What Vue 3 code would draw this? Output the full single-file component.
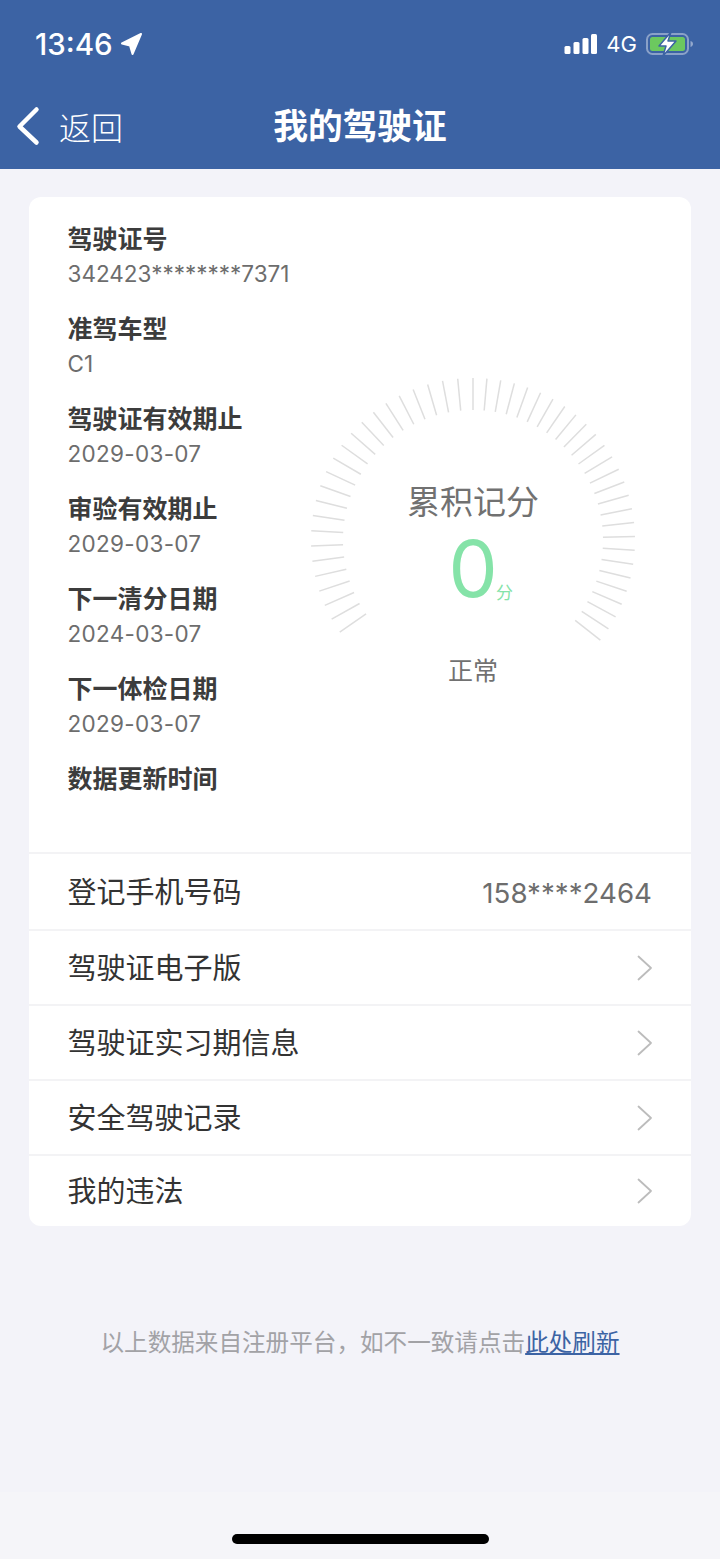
<script setup>
const items = [
  { label: '驾驶证号', value: '342423********7371' },
  { label: '准驾车型', value: 'C1' },
  { label: '驾驶证有效期止', value: '2029-03-07', date: true },
  { label: '审验有效期止', value: '2029-03-07', date: true },
  { label: '下一清分日期', value: '2024-03-07', date: true },
  { label: '下一体检日期', value: '2029-03-07', date: true },
  { label: '数据更新时间', value: '' }
]
const links = ['驾驶证电子版', '驾驶证实习期信息', '安全驾驶记录', '我的违法']

const c = 163
const ticks = []
const addTick = (deg) => {
  const a = (deg * Math.PI) / 180
  const s = Math.sin(a)
  const k = Math.cos(a)
  ticks.push({
    x1: (c + 130 * s).toFixed(2),
    y1: (c - 130 * k).toFixed(2),
    x2: (c + 162 * s).toFixed(2),
    y2: (c - 162 * k).toFixed(2)
  })
}
for (let i = 0; i <= 23; i++) addTick(-i * 5.42)
for (let i = 1; i <= 26; i++) addTick(i * 4.93)
</script>

<template>
  <div class="page">
    <header class="header">
      <div class="status">
        <div class="status-left">
          <span class="time">13:46</span>
          <svg class="loc" width="24" height="24" viewBox="0 0 24 24">
            <path d="M22 2 3 11.5 11 13.5 13.5 22Z" fill="#fff" stroke="#fff" stroke-width="2" stroke-linejoin="round" />
          </svg>
        </div>
        <div class="status-right">
          <svg width="34" height="22" viewBox="0 0 34 22">
            <rect x="0.5" y="13" width="6" height="8" rx="1.5" fill="#fff" />
            <rect x="9.5" y="9" width="6" height="12" rx="1.5" fill="#fff" />
            <rect x="18.5" y="5" width="6" height="16" rx="1.5" fill="#fff" />
            <rect x="27" y="1" width="6" height="20" rx="1.5" fill="#fff" />
          </svg>
          <span class="net">4G</span>
          <svg width="48" height="26" viewBox="0 0 48 26">
            <rect x="1" y="3" width="41" height="20" rx="5.5" fill="none" stroke="#fff" stroke-opacity=".4" stroke-width="2" />
            <rect x="4" y="6" width="35" height="14" rx="2.5" fill="#6cc85f" />
            <path d="M44.5 10v6c1.6-.4 2.5-1.6 2.5-3s-.9-2.600-2.500-3Z" fill="#fff" fill-opacity=".45" />
            <path d="M25 1 13 15h7l-3 10 13-15h-8Z" fill="#fff" stroke="#3c63a4" stroke-width="1.500" stroke-linejoin="round" />
          </svg>
        </div>
      </div>
      <nav class="nav">
        <div class="back">
          <svg width="26" height="40" viewBox="0 0 26 40">
            <path d="M21.500 3.500 4.500 20.500 21.500 36.500" fill="none" stroke="#fff" stroke-width="4.500" stroke-linecap="round" stroke-linejoin="round" />
          </svg>
          <span>返回</span>
        </div>
        <h1 class="title">我的驾驶证</h1>
      </nav>
    </header>

    <main class="main">
      <section class="card">
        <div class="top">
          <div class="info">
            <div v-for="item in items" :key="item.label" class="info-item">
              <div class="info-label">{{ item.label }}</div>
              <div class="info-value" :class="{ date: item.date }">{{ item.value }}</div>
            </div>
          </div>
          <div class="gauge">
            <svg class="dial" width="326" height="326" viewBox="0 0 326 326">
              <line
                v-for="(t, i) in ticks"
                :key="i"
                :x1="t.x1"
                :y1="t.y1"
                :x2="t.x2"
                :y2="t.y2"
                stroke="#dedede"
                stroke-width="1.500"
              />
            </svg>
            <div class="gauge-text">
              <div class="gauge-title">累积记分</div>
              <div class="gauge-score"><span class="zero">0</span><span class="unit">分</span></div>
              <div class="gauge-state">正常</div>
            </div>
          </div>
        </div>
        <div class="row row-first">
          <span class="row-label">登记手机号码</span>
          <span class="phone">158****2464</span>
        </div>
        <div v-for="(link, i) in links" :key="link" class="row" :class="{ 'row-last': i === links.length - 1 }">
          <span class="row-label">{{ link }}</span>
          <svg class="chev" width="16" height="26" viewBox="0 0 16 26">
            <path d="M1.500 1.500 14 13 1.500 24.500" fill="none" stroke="#bcbcbc" stroke-width="1.800" stroke-linecap="round" stroke-linejoin="round" />
          </svg>
        </div>
      </section>
      <p class="note">以上数据来自注册平台，如不一致请点击<a class="refresh">此处刷新</a></p>
    </main>

    <footer class="home">
      <div class="home-bar"></div>
    </footer>
  </div>
</template>

<style>
html, body { margin: 0; background: #f3f3f9; }
</style>

<style scoped>
.page {
  width: 720px;
  height: 1559px;
  display: flex;
  flex-direction: column;
  overflow: hidden;
  background: #f3f3f9;
  font-family: "Inter", "Noto Sans CJK SC", sans-serif;
  color: #333;
}
.header {
  height: 169px;
  background: #3c63a4;
  color: #fff;
  display: flex;
  flex-direction: column;
  flex: none;
}
.status {
  height: 88px;
  box-sizing: border-box;
  padding: 24px 26px 0 35px;
  display: flex;
  justify-content: space-between;
  align-items: flex-start;
}
.status-left { display: flex; align-items: center; gap: 6px; height: 40px; }
.time { font-size: 29.500px; font-weight: 500; line-height: 40px; }
.status-right { display: flex; align-items: center; height: 40px; }
.net { font-size: 22px; line-height: 40px; margin: 0 9px 0 8px; }
.nav {
  height: 81px;
  display: flex;
  align-items: center;
  justify-content: center;
  position: relative;
}
.back {
  position: absolute;
  left: 15px;
  top: 0;
  height: 76px;
  display: flex;
  align-items: center;
  gap: 18px;
  font-size: 32px;
  font-weight: 300;
}
.title {
  margin: 0 0 5px;
  font-size: 34.700px;
  font-weight: 700;
  line-height: 44px;
}
.main {
  flex: 1;
  display: flex;
  flex-direction: column;
  padding: 28px 29px 0;
}
.card {
  background: #fff;
  border-radius: 12px;
  display: flex;
  flex-direction: column;
}
.top {
  height: 655px;
  box-sizing: border-box;
  padding: 25px 55px 0 38.500px;
  display: flex;
  justify-content: space-between;
}
.info-item { height: 90px; }
.info-label {
  font-size: 25px;
  font-weight: 700;
  line-height: 34px;
  color: #3c3c3c;
}
.info-value {
  font-size: 22.500px;
  line-height: 36px;
  color: #6d6d6d;
}
.date { letter-spacing: 0.3px; }
.gauge {
  position: relative;
  width: 326px;
  height: 326px;
  margin-top: 155px;
}
.dial { display: block; }
.gauge-text {
  position: absolute;
  inset: 0;
  display: flex;
  flex-direction: column;
  align-items: center;
}
.gauge-title {
  margin-top: 103px;
  font-size: 33px;
  line-height: 44px;
  color: #717171;
}
.gauge-score {
  display: flex;
  align-items: flex-end;
  height: 84px;
  margin-top: 3px;
  padding-left: 15.500px;
}
.zero {
  font-size: 78px;
  font-weight: 400;
  line-height: 84px;
  color: #85e3a8;
}
.unit {
  font-size: 17px;
  line-height: 22px;
  margin-left: -1.500px;
  margin-bottom: 7px;
  color: #85e3a8;
}
.gauge-state {
  margin-top: 43px;
  font-size: 25px;
  line-height: 34px;
  color: #717171;
}
.row {
  height: 75px;
  box-sizing: border-box;
  border-top: 2px solid #f3f3f5;
  padding: 0 39px;
  display: flex;
  align-items: center;
  justify-content: space-between;
  font-size: 29px;
  color: #333;
}
.row-label { margin-bottom: 4px; margin-left: -0.500px; }
.row-first { height: 77px; }
.row-last { height: 72px; }
.phone { color: #6d6d6d; font-size: 27.700px; margin-top: 2px; }
.chev { margin-right: -1px; flex: none; }
.note {
  margin: 100px 0 0;
  text-align: center;
  font-size: 23.600px;
  line-height: 34px;
  color: #a2a2a6;
}
.refresh {
  color: #3c63a4;
  text-decoration: underline;
}
.home {
  margin-top: auto;
  height: 67px;
  flex: none;
  background: #f5f5f9;
  display: flex;
  justify-content: center;
}
.home-bar {
  width: 257px;
  height: 10px;
  margin-top: 42px;
  border-radius: 5px;
  background: #000;
}
</style>
